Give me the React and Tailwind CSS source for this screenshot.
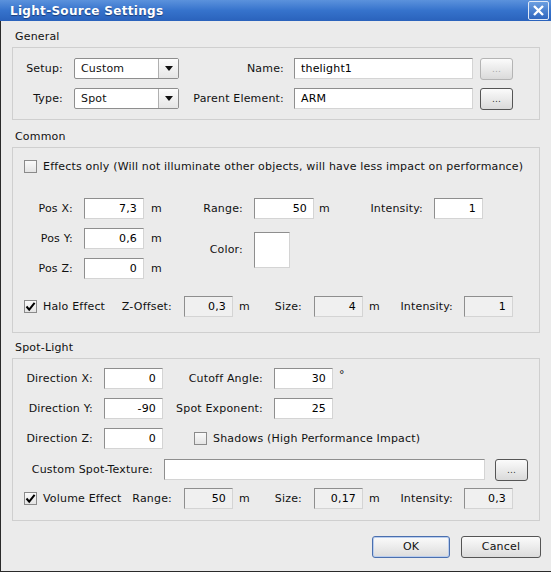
import React from "react";

const Field = ({ value, w = "w-[60px]", disabled = false, align = "text-right" }) => (
  <div
    className={`${w} h-[21px] shrink-0 border border-t-[#8e8e8e] border-l-[#8e8e8e] border-r-[#d4d4d4] border-b-[#d4d4d4] ${
      disabled ? "bg-[#f0f0f0]" : "bg-white"
    } ${align} px-[6px] leading-[20px] text-[11px] text-black`}
  >
    {value}
  </div>
);

const Check = ({ checked }) => (
  <div className="w-[13px] h-[13px] border border-[#8a8a8a] bg-gradient-to-b from-[#fafafa] to-[#e4e4e4] flex items-center justify-center shrink-0">
    {checked && (
      <svg width="11" height="11" viewBox="0 0 11 11">
        <path d="M1.5 5.5 L4.2 8.6 L9.6 1.8" fill="none" stroke="#000" strokeWidth="2" />
      </svg>
    )}
  </div>
);

const Dots = ({ disabled }) => (
  <div
    className={`w-[33px] h-[22px] rounded-[3px] border ${
      disabled ? "border-[#b4b4b4] text-[#a8a8a8]" : "border-[#555] text-[#333]"
    } bg-gradient-to-b from-[#fbfbfb] to-[#dadada] flex items-center justify-center text-[9px] leading-none`}
  >
    ...
  </div>
);

const Select = ({ value }) => (
  <div className="w-[105px] h-[21px] border border-[#8e8e8e] rounded-[2px] bg-white flex text-[11px]">
    <div className="flex-1 pl-[6px] leading-[19px]">{value}</div>
    <div className="w-[20px] border-l border-[#b0b0b0] bg-gradient-to-b from-[#fdfdfd] to-[#e6e6e6] flex items-center justify-center">
      <svg width="8" height="5" viewBox="0 0 8 5">
        <path d="M0 0 H8 L4 5 Z" fill="#111" />
      </svg>
    </div>
  </div>
);

const Lbl = ({ children, w }) => <div className={`${w} text-right shrink-0`}>{children}</div>;

const Group = ({ title, children, className }) => (
  <div className="mx-[11px]">
    <div className="pl-[3px] h-[20px] leading-[20px]">{title}</div>
    <div className={`border border-[#cfcfcf] ${className}`}>{children}</div>
  </div>
);

export default function App() {
  return (
    <div
      className="w-[551px] h-[572px] bg-[#ebebeb] text-[11px] leading-[14px] tracking-[0.18px] text-[#111] border-l border-b border-[#2a2a2a] flex flex-col"
      style={{ fontFamily: '"DejaVu Sans", sans-serif' }}
    >
      {/* title bar */}
      <div className="h-[21px] -ml-px bg-gradient-to-b from-[#5b92dc] via-[#3673cc] to-[#2a62bc] flex items-center justify-between pl-[10px] pr-[2px]">
        <div className="text-white font-bold text-[12px] tracking-[0.3px] [text-shadow:0_1px_1px_#1a3c78]">
          Light-Source Settings
        </div>
        <div className="w-[21px] h-[19px] border border-[#dfe8f6] rounded-[2px] bg-gradient-to-b from-[#6b9ee0] to-[#2f66bf] flex items-center justify-center">
          <svg width="13" height="13" viewBox="0 0 13 13">
            <path d="M2 2 L11 11 M11 2 L2 11" stroke="#fff" strokeWidth="2.4" />
          </svg>
        </div>
      </div>

      <div className="pt-[6px]">
        <Group title="General" className="pt-[10px] pb-[10px] flex flex-col gap-[9px]">
          <div className="flex items-center h-[21px]">
            <Lbl w="w-[50px]">Setup:</Lbl>
            <div className="ml-[11px]"><Select value="Custom" /></div>
            <Lbl w="w-[105px]">Name:</Lbl>
            <div className="ml-[10px]"><Field value="thelight1" w="w-[179px]" align="text-left" /></div>
            <div className="ml-[7px] self-start"><Dots disabled /></div>
          </div>
          <div className="flex items-center h-[21px]">
            <Lbl w="w-[50px]">Type:</Lbl>
            <div className="ml-[11px]"><Select value="Spot" /></div>
            <Lbl w="w-[105px]">Parent Element:</Lbl>
            <div className="ml-[10px]"><Field value="ARM" w="w-[179px]" align="text-left" /></div>
            <div className="ml-[7px] self-start"><Dots /></div>
          </div>
        </Group>
      </div>

      <div className="pt-[7px]">
        <Group title="Common" className="pt-[12px] pb-[15px]">
          <div className="flex items-center h-[13px] pl-[11px]">
            <Check />
            <div className="ml-[6px]">
              Effects only (Will not illuminate other objects, will have less impact on performance)
            </div>
          </div>
          <div className="mt-[25px] flex items-center h-[21px]">
            <Lbl w="w-[60px]">Pos X:</Lbl>
            <div className="ml-[11px]"><Field value="7,3" /></div>
            <div className="w-[17px] pl-[7px]">m</div>
            <Lbl w="w-[82px]">Range:</Lbl>
            <div className="ml-[11px]"><Field value="50" /></div>
            <div className="w-[17px] pl-[5px]">m</div>
            <Lbl w="w-[92px]">Intensity:</Lbl>
            <div className="ml-[11px]"><Field value="1" w="w-[49px]" /></div>
          </div>
          <div className="mt-[9px] flex">
            <div className="flex flex-col gap-[9px]">
              <div className="flex items-center h-[21px]">
                <Lbl w="w-[60px]">Pos Y:</Lbl>
                <div className="ml-[11px]"><Field value="0,6" /></div>
                <div className="w-[17px] pl-[7px]">m</div>
              </div>
              <div className="flex items-center h-[21px]">
                <Lbl w="w-[60px]">Pos Z:</Lbl>
                <div className="ml-[11px]"><Field value="0" /></div>
                <div className="w-[17px] pl-[7px]">m</div>
              </div>
            </div>
            <div className="flex items-start pt-[4px]">
              <Lbl w="w-[82px]"><div className="pt-[11px]">Color:</div></Lbl>
              <div className="ml-[11px] w-[36px] h-[36px] bg-white border border-t-[#8e8e8e] border-l-[#8e8e8e] border-r-[#d4d4d4] border-b-[#d4d4d4]" />
            </div>
          </div>
          <div className="mt-[17px] flex items-center h-[21px]">
            <div className="w-[159px] flex items-center pl-[11px]">
              <Check checked />
              <div className="ml-[6px]">Halo Effect</div>
              <div className="ml-auto">Z-Offset:</div>
            </div>
            <div className="ml-[12px]"><Field value="0,3" w="w-[49px]" disabled /></div>
            <div className="w-[18px] pl-[6px]">m</div>
            <Lbl w="w-[51px]">Size:</Lbl>
            <div className="ml-[12px]"><Field value="4" w="w-[49px]" disabled /></div>
            <div className="w-[18px] pl-[6px]">m</div>
            <Lbl w="w-[72px]">Intensity:</Lbl>
            <div className="ml-[11px]"><Field value="1" w="w-[49px]" disabled /></div>
          </div>
        </Group>
      </div>

      <div className="pt-[5px]">
        <Group title="Spot-Light" className="pt-[9px] pb-[11px]">
          <div className="flex flex-col gap-[9px]">
            <div className="flex items-center h-[21px]">
              <Lbl w="w-[80px]">Direction X:</Lbl>
              <div className="ml-[11px]"><Field value="0" w="w-[59px]" /></div>
              <Lbl w="w-[100px]">Cutoff Angle:</Lbl>
              <div className="ml-[11px]"><Field value="30" w="w-[59px]" /></div>
              <div className="ml-[6px] -mt-[8px]">°</div>
            </div>
            <div className="flex items-center h-[21px]">
              <Lbl w="w-[80px]">Direction Y:</Lbl>
              <div className="ml-[11px]"><Field value="-90" w="w-[59px]" /></div>
              <Lbl w="w-[100px]">Spot Exponent:</Lbl>
              <div className="ml-[11px]"><Field value="25" w="w-[59px]" /></div>
            </div>
            <div className="flex items-center h-[21px]">
              <Lbl w="w-[80px]">Direction Z:</Lbl>
              <div className="ml-[11px]"><Field value="0" w="w-[59px]" /></div>
              <div className="ml-[31px]"><Check /></div>
              <div className="ml-[6px]">Shadows (High Performance Impact)</div>
            </div>
          </div>
          <div className="mt-[10px] flex items-center h-[21px]">
            <Lbl w="w-[140px]">Custom Spot-Texture:</Lbl>
            <div className="ml-[11px]"><Field value="" w="w-[321px]" /></div>
            <div className="ml-[10px] self-start"><Dots /></div>
          </div>
          <div className="mt-[8px] flex items-center h-[21px]">
            <div className="w-[159px] flex items-center pl-[11px]">
              <Check checked />
              <div className="ml-[6px]">Volume Effect</div>
              <div className="ml-auto">Range:</div>
            </div>
            <div className="ml-[12px]"><Field value="50" w="w-[49px]" disabled /></div>
            <div className="w-[18px] pl-[6px]">m</div>
            <Lbl w="w-[51px]">Size:</Lbl>
            <div className="ml-[12px]"><Field value="0,17" w="w-[49px]" disabled /></div>
            <div className="w-[18px] pl-[6px]">m</div>
            <Lbl w="w-[72px]">Intensity:</Lbl>
            <div className="ml-[11px]"><Field value="0,3" w="w-[49px]" disabled /></div>
          </div>
        </Group>
      </div>

      <div className="flex justify-end gap-[11px] pr-[10px] mt-[15px]">
        <div className="w-[78px] h-[22px] rounded-[3px] border border-[#4a6fae] shadow-[inset_0_0_0_1px_#b9cdee] bg-gradient-to-b from-[#fbfbfb] to-[#dcdcdc] flex items-center justify-center">
          OK
        </div>
        <div className="w-[80px] h-[22px] rounded-[3px] border border-[#555] bg-gradient-to-b from-[#fbfbfb] to-[#dcdcdc] flex items-center justify-center">
          Cancel
        </div>
      </div>
    </div>
  );
}
